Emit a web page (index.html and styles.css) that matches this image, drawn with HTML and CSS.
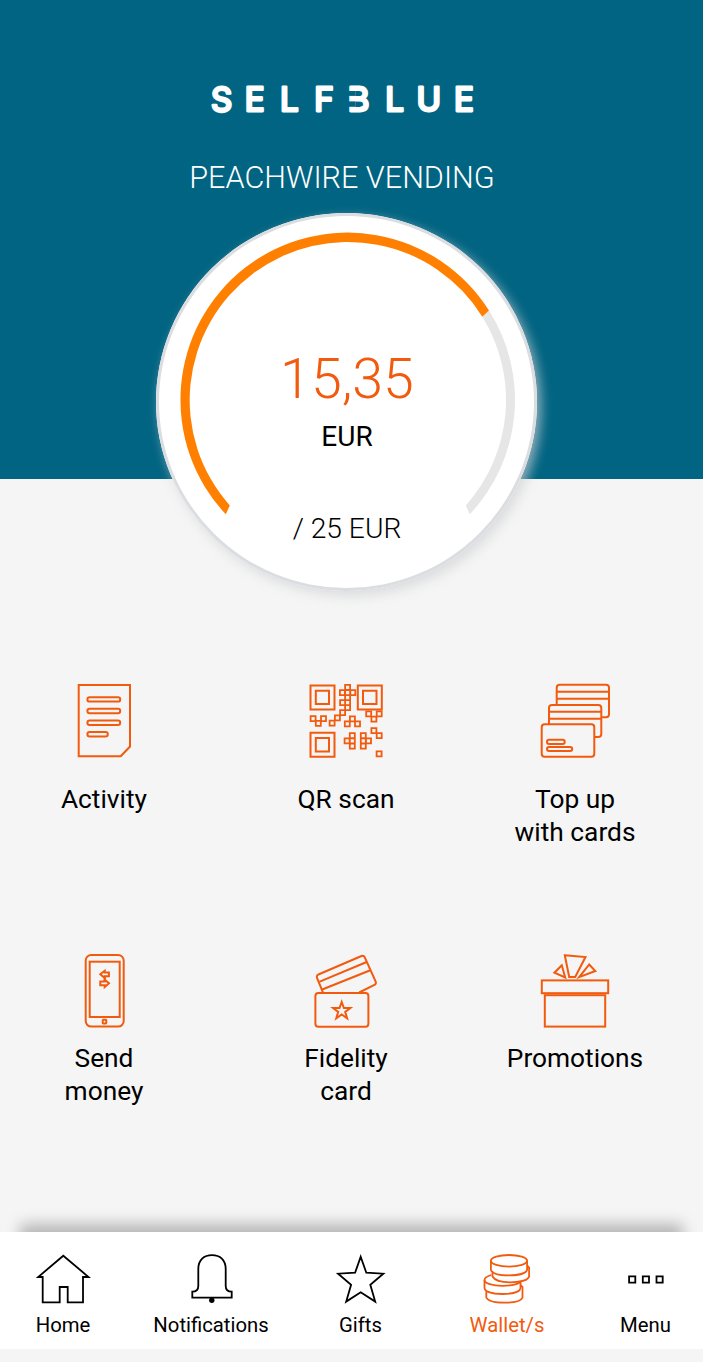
FILE: index.html
```html
<!DOCTYPE html>
<html lang="en">
<head>
    <meta charset="UTF-8">
    <meta name="viewport" content="width=device-width, initial-scale=1.0">
    <title>Selfblue Wallet</title>
    <link rel="stylesheet" href="styles.css">
</head>
<body>
    <header class="header">
        <svg class="logo" width="280" height="50" viewBox="0 -5 280 50">
            <text y="30.7" x="6 39.8 75.1 109.3 142.8 180.2 211.6 249">SELFBLUE</text>
            <!-- open left side of the B -->
            <rect class="logo-gap" x="142" y="11" width="8.5" height="4.9"/>
            <rect class="logo-gap" x="142" y="21.4" width="8.5" height="5.4"/>
        </svg>
        <h1 class="company">PEACHWIRE VENDING</h1>
        <div class="gauge">
            <svg class="gauge-arc" width="380" height="378" viewBox="-0.5 0 380 378">
                <path class="arc-rest" d="M332.5 97.5A167.2 167.2 0 0 1 313.3 301.3L309.3 292.4A158.2 158.2 0 0 0 325.8 103.7z"/>
                <path class="arc-value" d="M69.3 301.3A167.2 167.2 0 1 1 332.5 97.5L325.8 103.7A158.2 158.2 0 1 0 73.3 292.4z"/>
            </svg>
            <div class="gauge-text">
                <div class="amount">15,35</div>
                <div class="currency">EUR</div>
                <div class="limit">/ 25 EUR</div>
            </div>
        </div>
    </header>

    <main class="actions">
        <a class="action">
            <svg class="icon" viewBox="0 0 76 76">
                <path d="M12.7 2H64V63.5L54.7 73.3H12.7z"/>
                <rect x="21.4" y="14.2" width="32.8" height="4.4" rx="2.2"/>
                <rect x="21.4" y="25.8" width="32.8" height="4.4" rx="2.2"/>
                <rect x="21.4" y="37.5" width="32.8" height="4.4" rx="2.2"/>
                <rect x="21.4" y="49.1" width="20.4" height="4.4" rx="2.2"/>
            </svg>
            <span>Activity</span>
        </a>
        <a class="action">
            <svg class="icon" viewBox="0 0 76 76">
                <path d="M2.5 2.5h24v24h-24zM7.8 7.8h13.2v13.2h-13.2z"/>
                <path d="M49.8 2.5h24v24h-24zM55 7.8h13.5v13.2h-13.5z"/>
                <path d="M2.5 49.8h24v24h-24zM7.8 55h13.2v13.5h-13.2z"/>
                <path class="qr" d="M37.1 1.9h5v5h-5zM31.9 7.1h5v5h-5zM37.1 7.1h5v5h-5zM42.3 7.1h5v5h-5zM37.1 12.1h5v5h-5zM32.1 17.1h5v5h-5zM37.1 17.1h5v5h-5zM37.1 22.1h5v5h-5zM32.1 27.1h5v5h-5zM26.9 32.4h5v5h-5zM21.6 37.7h5v5h-5z
                    M2.6 33.1h5v5h-5zM7.8 37.9h5v5h-5zM13 33.1h5v5h-5z
                    M36.8 38.4h5v5h-5zM41.9 33.3h5v5h-5zM47 38.4h5v5h-5z
                    M58.2 28.4h5v5h-5zM63.4 33.6h5v5h-5zM68.7 28.4h5v5h-5z
                    M63.4 45.1h5v5h-5zM68.7 50.2h5v5h-5z
                    M36.6 55.4h5v5h-5zM41.8 50.2h5v5h-5zM41.8 55.4h5v5h-5zM41.8 60.6h5v5h-5z
                    M52.8 50.2h5v5h-5zM52.8 55.4h5v5h-5zM52.8 60.6h5v5h-5zM58 55.4h5v5h-5z
                    M68.6 68.3h5v5h-5z"/>
            </svg>
            <span>QR scan</span>
        </a>
        <a class="action">
            <svg class="icon" viewBox="-0.5 0 76 76">
                <path d="M19.2 22V4.7a3 3 0 0 1 3-3h46.3a3 3 0 0 1 3 3v26.6a3 3 0 0 1-3 3h-4.7M19.2 8.7h52.3M19.2 15.7h52.3"/>
                <path d="M11.5 41.3V25a3 3 0 0 1 3-3h46.3a3 3 0 0 1 3 3v26a3 3 0 0 1-3 3h-4M11.5 28.7h52.3M11.5 35.7h52.3"/>
                <rect x="4.2" y="41.3" width="52.6" height="32.4" rx="3"/>
                <rect x="9.5" y="56.7" width="17.7" height="4.2" rx="2"/>
                <rect x="9.5" y="63.9" width="25.2" height="4.2" rx="2"/>
            </svg>
            <span>Top up<br>with cards</span>
        </a>
        <a class="action">
            <svg class="icon" viewBox="-0.5 0 76 76">
                <rect x="19.2" y="2" width="38" height="71.6" rx="5.5"/>
                <rect x="23.2" y="8.7" width="30" height="55.3"/>
                <rect x="36.2" y="66.8" width="3.6" height="3.6" rx="0.6"/>
                <path d="M33.8 21.3L38.2 17.8V19.6H42.4V23.2H38.2V25zM42.5 30.3L38.2 34V32.2H33.8V28.5H38.2V26.7z"/>
                <path d="M38.2 24v4"/>
            </svg>
            <span>Send<br>money</span>
        </a>
        <a class="action">
            <svg class="icon" viewBox="0.3 0 76 76">
                <path d="M15.3 39.7L9.3 24.8a2.5 2.5 0 0 1 1.4-3.3L53.8 3a2.5 2.5 0 0 1 3.3 1.4L68 28.6a2.5 2.5 0 0 1-1.3 3.3L51.5 39.5M12 28.7L59 9M14.5 36.5L62 17.5"/>
                <rect x="7.7" y="40" width="53" height="33.7" rx="3"/>
                <path d="M34 49L36.2 55H42.6L37.5 58.9L39.4 65.2L34 61.5L28.6 65.2L30.5 58.9L25.4 55H31.8z"/>
            </svg>
            <span>Fidelity<br>card</span>
        </a>
        <a class="action">
            <svg class="icon" viewBox="0 0 76 76">
                <path d="M27.8 2.3L48.5 4L38.2 24H32.2zM24.8 12.3L17.4 19.7L28.2 24.5zM52.2 11.5L58.3 18L42.2 24.1z"/>
                <rect x="4.8" y="27.4" width="66.4" height="12.8"/>
                <rect x="7.8" y="42.2" width="60.4" height="31.4"/>
            </svg>
            <span>Promotions</span>
        </a>
    </main>

    <nav class="navbar">
        <a class="nav-item">
            <svg class="nav-icon" viewBox="0 0 60 54">
                <path d="M30.3 3.7L55.5 25H50V50.3H34.7V35H26.7V50.3H9.7V25H5.2z"/>
            </svg>
            <span>Home</span>
        </a>
        <a class="nav-item">
            <svg class="nav-icon" viewBox="0 0 60 54">
                <path d="M17.3 17C17.3 8 23 3.2 31 3.2S44.7 8 44.7 17V34C44.7 37.5 47 39.7 50.7 39.7V45.7H11.3V39.7C15 39.7 17.3 37.5 17.3 34z"/>
                <circle class="clapper" cx="30.8" cy="48.2" r="2.7"/>
            </svg>
            <span>Notifications</span>
        </a>
        <a class="nav-item">
            <svg class="nav-icon" viewBox="0.5 0 60 54">
                <path d="M30.2 4.8L35.8 20.7L52.8 21.7L39.8 32.7L44.7 49.6L30.2 40.3L15.7 49.6L20.6 32.7L7.6 21.7L24.6 20.7z"/>
            </svg>
            <span>Gifts</span>
        </a>
        <a class="nav-item active">
            <svg class="nav-icon" viewBox="0.2 0 60 54">
                <ellipse cx="32.2" cy="8.8" rx="18.1" ry="5.8"/>
                <path d="M14.1 8.8V17.6C15 21.5 23 23.4 32.2 23.4S49.5 21.5 50.3 17.6V8.8"/>
                <path d="M15.7 20.5V24.5C18 28.5 25 30.3 33.5 30.3S51 28.5 52.3 24.5V15.5L50.3 13.5"/>
                <path d="M14.5 23C10 24.3 7.7 26 7.7 28C7.7 31.5 15.5 33.8 25.5 33.8C33.5 33.8 40.5 32.3 43.7 30"/>
                <path d="M7.7 28V36C8 39.8 15.5 42 25.7 42S43.4 39.8 43.7 36V30"/>
                <path d="M9.5 39.5V45.5C11 49 18 50.7 27.6 50.7S44.5 49 45.7 45.5V35L43.7 33.3"/>
            </svg>
            <span>Wallet/s</span>
        </a>
        <a class="nav-item">
            <svg class="nav-icon" viewBox="0.5 0 60 54">
                <path d="M13.6 24.4h6.2v6.2h-6.2zM27.3 24.4h6.2v6.2h-6.2zM41 24.4h6.2v6.2h-6.2z"/>
            </svg>
            <span>Menu</span>
        </a>
    </nav>
</body>
</html>
```
FILE: styles.css
```css
* {
    box-sizing: border-box;
}

body {
    margin: 0;
    height: 1362px;
    background-color: #f5f5f5;
    color: #000;
    font-family: Roboto, sans-serif;
    overflow: hidden;
}

/* Header */
.header {
    display: flex;
    flex-direction: column;
    align-items: center;
    height: 479px;
    padding-top: 75px;
    padding-right: 11px;
    background-color: #006482;
}

.logo {
    margin-right: 2px;
    flex-shrink: 0;
}

.logo text {
    font-family: Inter, sans-serif;
    font-size: 33px;
    font-weight: 400;
    fill: #fff;
    stroke: #fff;
    stroke-width: 2.8;
    stroke-linejoin: round;
}

.logo-gap {
    fill: #006482;
}

.company {
    margin: 33px 8px 0 0;
    color: #fff;
    font-size: 30.6px;
    font-weight: 300;
    line-height: 40px;
}

.gauge {
    display: grid;
    flex-shrink: 0;
    width: 381px;
    height: 378px;
    margin-top: 15px;
    border-radius: 50%;
    background-color: #fff;
    box-shadow: inset 0 0 0 3px #dcdde0, 4px 5px 12px rgba(208, 210, 212, 0.7);
}

.gauge-arc,
.gauge-text {
    grid-area: 1 / 1;
}

.arc-value {
    fill: #ff8000;
}

.arc-rest {
    fill: #e6e6e6;
}

.gauge-text {
    padding-top: 134px;
    padding-left: 2px;
    text-align: center;
}

.amount {
    color: #f25a0e;
    font-size: 55.5px;
    font-weight: 300;
    line-height: 66px;
}

.currency {
    margin-top: 8px;
    font-size: 28px;
    line-height: 32px;
}

.limit {
    margin-top: 60px;
    font-size: 28.2px;
    font-weight: 300;
    line-height: 32px;
}

/* Action grid */
.actions {
    display: grid;
    grid-template-columns: 208px 276px 182px;
    grid-template-rows: 270px 279px;
    padding-top: 204px;
}

.action {
    display: flex;
    flex-direction: column;
    align-items: center;
    gap: 24px;
    font-size: 26.3px;
    line-height: 33px;
    text-align: center;
}

.action:nth-child(n+4) {
    gap: 13px;
}

.icon {
    width: 76px;
    height: 76px;
    fill: none;
    stroke: #f25a0e;
    stroke-width: 2;
}

.icon .qr {
    stroke-width: 1.8;
}

/* Bottom bar */
.navbar {
    position: relative;
    display: grid;
    grid-template-columns: 126px 170px 129px 164px 113px;
    height: 117px;
    padding-top: 20px;
    background-color: #fff;
    box-shadow: 0 -28px 14px -20px rgba(0, 0, 0, 0.26);
}

.nav-item {
    display: flex;
    flex-direction: column;
    align-items: center;
    gap: 7px;
    font-size: 20.3px;
    line-height: 24px;
}

.nav-icon {
    width: 60px;
    height: 54px;
    fill: none;
    stroke: #000;
    stroke-width: 1.8;
}

.nav-icon .clapper {
    fill: #000;
    stroke: none;
}

.nav-item.active {
    color: #f25a0e;
}

.nav-item.active .nav-icon {
    stroke: #f25a0e;
}
```
